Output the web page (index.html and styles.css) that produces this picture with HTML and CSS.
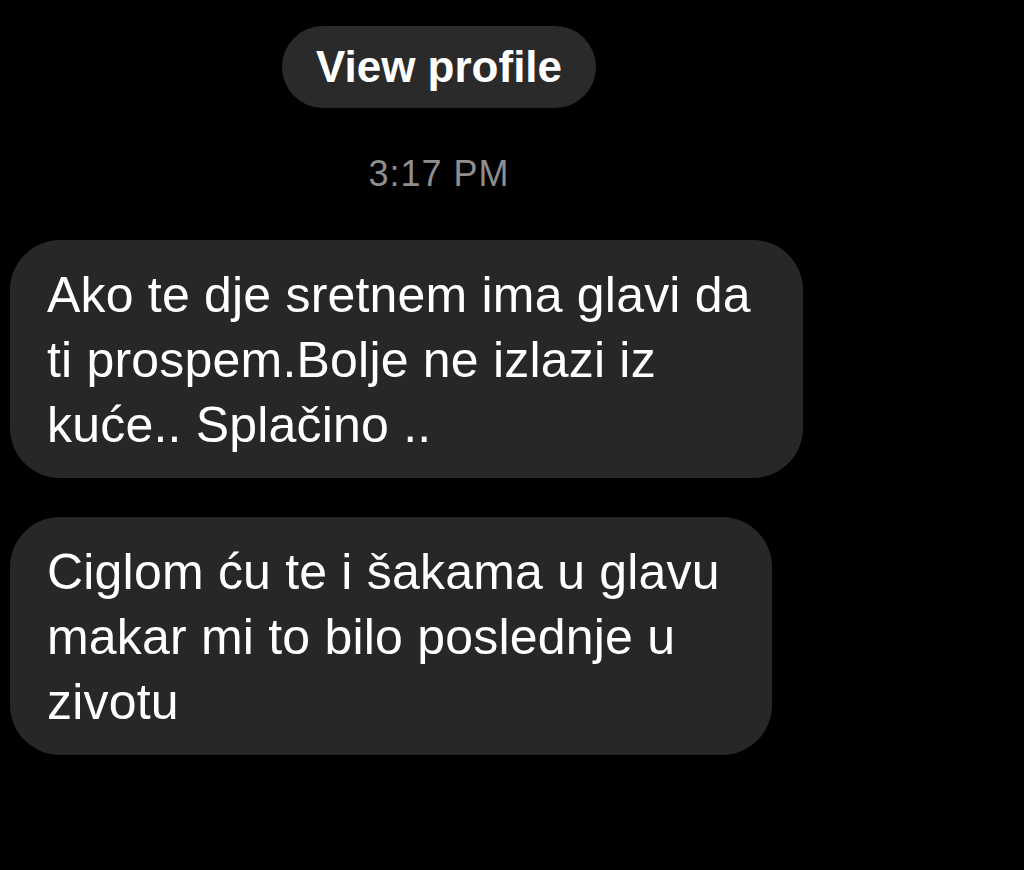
FILE: index.html
```html
<!DOCTYPE html>
<html lang="en">
<head>
    <meta charset="UTF-8">
    <meta name="viewport" content="width=device-width, initial-scale=1.0">
    <title>Chat</title>
    <link rel="stylesheet" href="styles.css">
</head>
<body>
    <div class="top">
        <button class="profilebtn">View profile</button>
        <p class="time">3:17 PM</p>
    </div>

    <div class="messages">
        <div class="bubble">Ako te dje sretnem ima glavi da<br>ti prospem.Bolje ne izlazi iz<br>kuće.. Splačino ..</div>
        <div class="bubble">Ciglom ću te i šakama u glavu<br>makar mi to bilo poslednje u<br>zivotu</div>
    </div>
</body>
</html>
```

FILE: styles.css
```css
*{
    box-sizing: border-box;
}
body{
    margin: 0;
    background-color: #000;
    color: white;
    font-family: 'Liberation Sans', Arial, sans-serif;
}
.top{
    width: 878px;
    display: flex;
    flex-direction: column;
    align-items: center;
}
.profilebtn{
    margin-top: 26px;
    height: 82px;
    padding: 0 34px;
    border: 0;
    border-radius: 41px;
    background-color: #2a2a2a;
    color: white;
    font-family: inherit;
    font-weight: bold;
    font-size: 44px;
    line-height: 82px;
}
.time{
    margin: 46px 0 0 0;
    color: #8e8e8e;
    font-size: 36px;
    line-height: 40px;
    letter-spacing: 1px;
}
.messages{
    margin-top: 46px;
    padding-left: 10px;
    display: flex;
    flex-direction: column;
    align-items: flex-start;
    gap: 39px;
}
.bubble{
    background-color: #272727;
    border-radius: 50px;
    padding: 23px 52px 20px 37px;
    font-size: 50px;
    line-height: 65px;
    letter-spacing: 0.2px;
    white-space: nowrap;
}
```
